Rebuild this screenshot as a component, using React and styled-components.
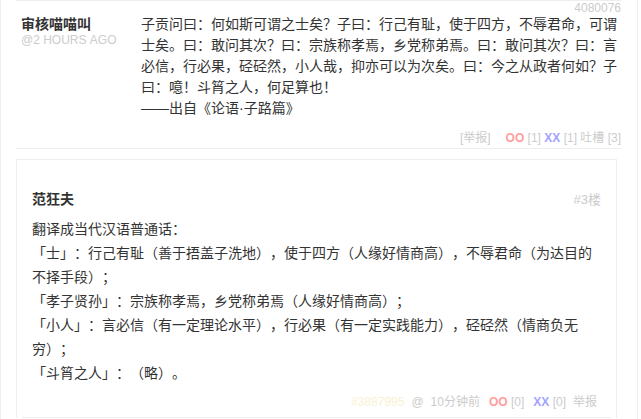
import React from "react";
import styled, { createGlobalStyle } from "styled-components";

const GlobalStyle = createGlobalStyle`
	body {
		margin: 0;
		background: #fff;
		font-family: "Liberation Sans", "Noto Sans CJK SC", sans-serif;
		color: #333;
		text-spacing-trim: space-all;
		font-kerning: none;
	}
`;

const Page = styled.div`
	width: 638px;
	min-height: 419px;
	box-sizing: border-box;
	border-left: 1px solid #eee;
	border-right: 1px solid #eee;
	padding: 0 16px 0 15px;
`;

const CommentList = styled.ol`
	list-style: none;
	margin: 0;
	padding: 0;
`;

const TopComment = styled.li`
	border-top: 1px solid #eee;
	border-bottom: 1px solid #eee;
`;

const IdLine = styled.div`
	margin-top: 1px;
	font-size: 12px;
	line-height: 12px;
	color: #ccc;
	text-align: right;
`;

const Row = styled.div`
	display: flex;
`;

const AuthorCol = styled.div`
	width: 120px;
	padding-left: 5px;
	flex-shrink: 0;
`;

const Author = styled.strong`
	display: block;
	font-size: 14px;
	line-height: 20px;
	color: #333;
`;

const Time = styled.small`
	display: block;
	font-size: 12px;
	line-height: 12px;
	color: #ccc;
`;

const Text = styled.p`
	flex: 1;
	margin: 0;
	font-size: 14px;
	line-height: ${(p) => p.$lh}px;
	color: #333;
	font-feature-settings: "fwid";
`;

const Actions = styled.div`
	margin-top: 10px;
	padding-bottom: 1px;
	font-size: 12px;
	line-height: 18px;
	color: #ccc;
	text-align: right;
`;

const Report = styled.span`
	margin-right: 15px;
`;

const Vote = styled.b`
	color: ${(p) => p.$color};
`;

const TucaoBox = styled.div`
	margin: 10px 4px 0 0;
	border: 1px solid #eee;
	border-bottom: none;
`;

const TucaoItem = styled.div`
	margin: 0 5px;
	padding: 28px 10px 6px;
	border-bottom: 1px solid #eee;
`;

const TucaoHead = styled.div`
	display: flex;
	justify-content: space-between;
	align-items: center;
	height: 20px;
	margin-bottom: 9px;
`;

const TucaoName = styled.strong`
	font-size: 14px;
	color: #333;
`;

const Floor = styled.span`
	font-size: 13px;
	color: #ccc;
`;

const TucaoFoot = styled.div`
	display: flex;
	justify-content: flex-end;
	gap: 7px;
	margin: 8px 4px 0 0;
	font-size: 12px;
	line-height: 18px;
	color: #ccc;
`;

const FaintId = styled.span`
	color: #f7f2cf;
`;

const VoteGroup = styled.span`
	margin-left: 2px;
`;

export default function App() {
	return (
		<>
			<GlobalStyle />
			<Page>
				<CommentList>
					<TopComment>
						<IdLine>4080076</IdLine>
						<Row>
							<AuthorCol>
								<Author>审核喵喵叫</Author>
								<Time>@2 HOURS AGO</Time>
							</AuthorCol>
							<Text $lh={21}>
								子贡问曰：何如斯可谓之士矣？子曰：行己有耻，使于四方，不辱君命，可谓士矣。曰：敢问其次？曰：宗族称孝焉，乡党称弟焉。曰：敢问其次？曰：言必信，行必果，硁硁然，小人哉，抑亦可以为次矣。曰：今之从政者何如？子曰：噫！斗筲之人，何足算也！
								<br />
								——出自《论语·子路篇》
							</Text>
						</Row>
						<Actions>
							<Report>[举报]</Report>
							<Vote $color="#ff9d9d">OO</Vote> [1] <Vote $color="#a3a3ff">XX</Vote> [1] 吐槽 [3]
						</Actions>
					</TopComment>
				</CommentList>
				<TucaoBox>
					<TucaoItem>
						<TucaoHead>
							<TucaoName>范狂夫</TucaoName>
							<Floor>#3楼</Floor>
						</TucaoHead>
						<Text $lh={24}>
							翻译成当代汉语普通话：
							<br />
							「士」：行己有耻（善于捂盖子洗地），使于四方（人缘好情商高），不辱君命（为达目的不择手段）；
							<br />
							「孝子贤孙」：宗族称孝焉，乡党称弟焉（人缘好情商高）；
							<br />
							「小人」：言必信（有一定理论水平），行必果（有一定实践能力），硁硁然（情商负无穷）；
							<br />
							「斗筲之人」：（略）。
						</Text>
						<TucaoFoot>
							<FaintId>#3887995</FaintId>
							<span>@</span>
							<span>10分钟前</span>
							<VoteGroup>
								<Vote $color="#ff9d9d">OO</Vote> [0]
							</VoteGroup>
							<VoteGroup>
								<Vote $color="#a3a3ff">XX</Vote> [0]
							</VoteGroup>
							<span>举报</span>
						</TucaoFoot>
					</TucaoItem>
				</TucaoBox>
			</Page>
		</>
	);
}
